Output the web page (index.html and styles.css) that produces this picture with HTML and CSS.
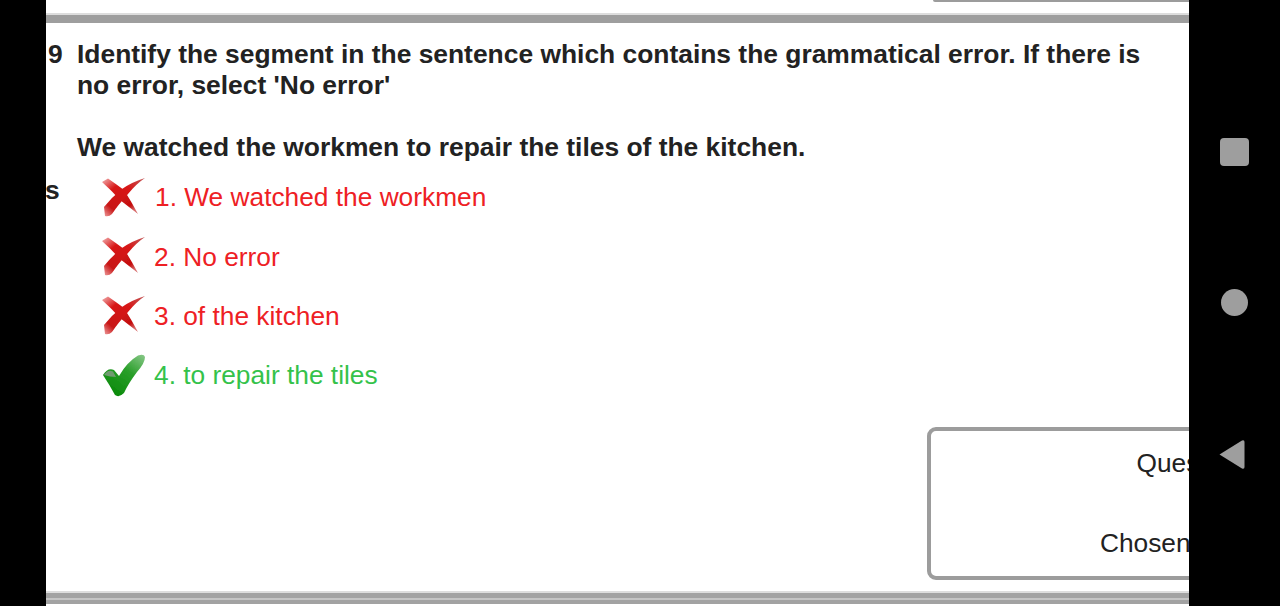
FILE: index.html
```html
<!DOCTYPE html>
<html lang="en">
<head>
    <meta charset="UTF-8">
    <title>Question Review</title>
    <link rel="stylesheet" href="styles.css">
</head>
<body>
    <div class="screen">
        <main class="page">
            <div class="prev-box"></div>
            <div class="rule rule-top"></div>

            <div class="question">
                <div class="q-no">9</div>
                <div class="q-text">
                    <p>Identify the segment in the sentence which contains the grammatical error. If there is no error, select 'No error'</p>
                    <p>We watched the workmen to repair the tiles of the kitchen.</p>
                </div>
            </div>

            <div class="answers">
                <div class="ans-label">s</div>
                <ul class="options">
                    <li class="option wrong first">
                        <svg class="icon" viewBox="0 0 44 40"><use href="#cross"/></svg>
                        <span>1. We watched the workmen</span>
                    </li>
                    <li class="option wrong">
                        <svg class="icon" viewBox="0 0 44 40"><use href="#cross"/></svg>
                        <span>2. No error</span>
                    </li>
                    <li class="option wrong">
                        <svg class="icon" viewBox="0 0 44 40"><use href="#cross"/></svg>
                        <span>3. of the kitchen</span>
                    </li>
                    <li class="option right">
                        <svg class="icon" viewBox="0 0 44 44"><use href="#tick"/></svg>
                        <span>4. to repair the tiles</span>
                    </li>
                </ul>
            </div>

            <div class="status-box">
                <div class="status-row">Question ID :</div>
                <div class="status-row">Chosen Option :</div>
            </div>

            <div class="rule rule-bottom"></div>
        </main>

        <nav class="nav-bar">
            <div class="nav-square"></div>
            <div class="nav-circle"></div>
            <svg class="nav-back" viewBox="0 0 27 31"><path d="M1.5 15.5 L24 1.5 Q26.5 0.5 26.5 3 L26.5 28 Q26.5 30.5 24 29.5 Z" fill="#9e9e9e"/></svg>
        </nav>
    </div>

    <svg class="defs" width="0" height="0">
        <defs>
            <linearGradient id="redFade" x1="0" y1="0" x2="0.8" y2="1">
                <stop offset="0" stop-color="#f2b4b4"/>
                <stop offset="0.32" stop-color="#d81818"/>
                <stop offset="0.85" stop-color="#c41010"/>
                <stop offset="1" stop-color="#d87070"/>
            </linearGradient>
            <linearGradient id="redTail" x1="1" y1="0" x2="0" y2="1">
                <stop offset="0" stop-color="#c25a5a"/>
                <stop offset="0.35" stop-color="#d81414"/>
                <stop offset="0.8" stop-color="#c81414"/>
                <stop offset="1" stop-color="#ee9c9c"/>
            </linearGradient>
            <linearGradient id="greenFade" x1="1" y1="0" x2="0.3" y2="1">
                <stop offset="0" stop-color="#8ac88a"/>
                <stop offset="0.45" stop-color="#2a9f2a"/>
                <stop offset="1" stop-color="#0a8a0a"/>
            </linearGradient>
            <filter id="soft"><feGaussianBlur stdDeviation="0.6"/></filter>
            <g id="cross" filter="url(#soft)">
                <path d="M1 4 L7 0.5 Q15 6 23 12 Q30 23 37 36 Q28 29 19 22 Q10 12 1 4 Z" fill="url(#redFade)"/>
                <path d="M3 29 Q11 19 21 11 Q31 4 44 0 Q35 6 27 16 Q17 27 11 36 Q8 39 4 38 Z" fill="url(#redTail)"/>
            </g>
            <g id="tick" filter="url(#soft)">
                <path d="M2 21 Q7 13 13 16 L18 22 Q26 8 37 1.5 Q43 -0.5 44 3 Q44 9 36 18 Q27 30 23 39 Q18 44 14 41 Q8 30 2 21 Z" fill="url(#greenFade)"/>
                <path d="M3 21 Q7 15 12 17.5 L15 23 Q9 23 3 21 Z" fill="#6f9a6f"/>
            </g>
        </defs>
    </svg>
</body>
</html>
```

FILE: styles.css
```css
* {
    box-sizing: border-box;
}
body {
    margin: 0;
    background-color: #000000;
    font-family: "Liberation Sans", Arial, sans-serif;
    color: #222222;
}
.screen {
    display: flex;
    width: 1280px;
    height: 606px;
    padding-left: 46px;
    overflow: hidden;
}
.page {
    width: 1143px;
    height: 606px;
    background-color: #ffffff;
    overflow: hidden;
    flex-shrink: 0;
}
.prev-box {
    height: 2px;
    margin-left: 887px;
    width: 400px;
    border-bottom: 2px solid #9c9c9c;
    border-bottom-left-radius: 4px;
}
.rule {
    height: 10px;
    background-color: #9e9e9e;
    border-top: 2px solid #dddddd;
}
.rule-top {
    margin-top: 11px;
}
.rule-bottom {
    height: 13px;
    margin-top: 11px;
    background: linear-gradient(#a2a2a2 0 5px, #c4c4c4 5px 7px, #a2a2a2 7px);
}
.question {
    display: flex;
    margin-top: 16px;
    font-size: 26.4px;
    line-height: 31px;
    font-weight: bold;
}
.q-no {
    width: 31px;
    padding-left: 2px;
}
.q-text {
    width: 1072px;
}
.q-text p {
    margin: 0 0 31px;
}
.answers {
    display: flex;
    margin-top: -26px;
}
.ans-label {
    width: 55px;
    margin-left: -1px;
    padding-top: 7px;
    font-size: 26.4px;
    line-height: 31px;
    font-weight: bold;
}
.options {
    list-style: none;
    margin: 0;
    padding: 0;
}
.option {
    display: flex;
    align-items: center;
    height: 59.4px;
    font-size: 26.3px;
}
.icon {
    display: block;
    width: 44px;
    height: 40px;
    margin-right: 9px;
    margin-left: 1px;
}
.first span {
    margin-left: 1px;
}
.right .icon {
    height: 44px;
    margin-left: 1px;
}
.wrong {
    color: #ee2024;
}
.right {
    color: #34c24a;
}
.status-box {
    width: 460px;
    height: 153px;
    margin: 21px 0 0 881px;
    padding: 14px 93px 0 0;
    border: 4px solid #9c9c9c;
    border-radius: 9px;
}
.status-row {
    height: 80px;
    line-height: 36px;
    font-size: 26.3px;
    text-align: right;
}
.nav-bar {
    display: flex;
    flex-direction: column;
    align-items: center;
    gap: 123px;
    width: 91px;
    padding-top: 138px;
    flex-shrink: 0;
}
.nav-square {
    width: 29px;
    height: 28px;
    background-color: #9e9e9e;
    border-radius: 4px;
}
.nav-circle {
    width: 27px;
    height: 27px;
    background-color: #9e9e9e;
    border-radius: 50%;
}
.nav-back {
    display: block;
    width: 27px;
    height: 31px;
    margin-right: 6px;
}
.defs {
    position: absolute;
}
```
